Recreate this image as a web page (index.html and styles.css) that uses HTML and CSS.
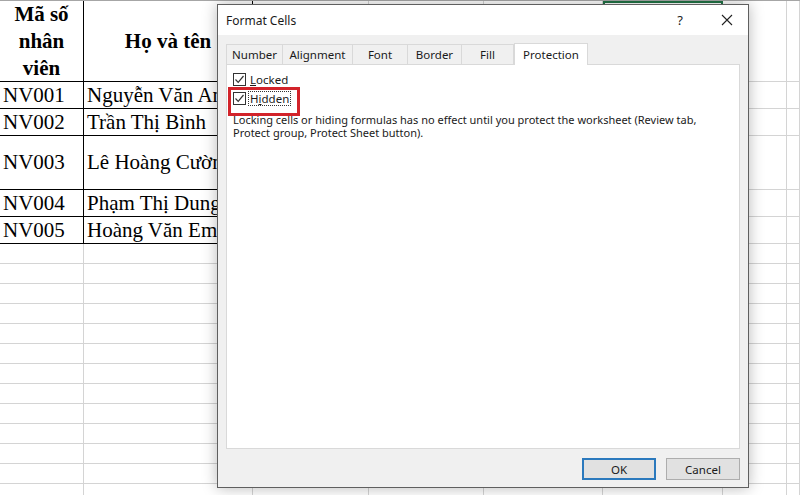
FILE: index.html
```html
<!DOCTYPE html>
<html lang="vi">
<head>
<meta charset="utf-8">
<title>Format Cells</title>
<link rel="stylesheet" href="styles.css">
</head>
<body>
<div class="sheet">
  <!-- row 1: header -->
  <div class="cell tb head">Mã số<br>nhân<br>viên</div>
  <div class="cell tb head">Họ và tên</div>
  <div class="cell"></div><div class="cell"></div><div class="cell"></div>
  <div class="cell sel"></div><div class="cell"></div><div class="cell"></div>

  <div class="cell tb">NV001</div><div class="cell tb">Nguyễn Văn An</div>
  <div class="cell"></div><div class="cell"></div><div class="cell"></div><div class="cell"></div><div class="cell"></div><div class="cell"></div>

  <div class="cell tb">NV002</div><div class="cell tb">Trần Thị Bình</div>
  <div class="cell"></div><div class="cell"></div><div class="cell"></div><div class="cell"></div><div class="cell"></div><div class="cell"></div>

  <div class="cell tb">NV003</div><div class="cell tb">Lê Hoàng Cường</div>
  <div class="cell"></div><div class="cell"></div><div class="cell"></div><div class="cell"></div><div class="cell"></div><div class="cell"></div>

  <div class="cell tb">NV004</div><div class="cell tb">Phạm Thị Dung</div>
  <div class="cell"></div><div class="cell"></div><div class="cell"></div><div class="cell"></div><div class="cell"></div><div class="cell"></div>

  <div class="cell tb">NV005</div><div class="cell tb">Hoàng Văn Em</div>
  <div class="cell"></div><div class="cell"></div><div class="cell"></div><div class="cell"></div><div class="cell"></div><div class="cell"></div>

  <!-- empty rows -->
  <div class="cell"></div><div class="cell"></div><div class="cell"></div><div class="cell"></div><div class="cell"></div><div class="cell"></div><div class="cell"></div><div class="cell"></div>
  <div class="cell"></div><div class="cell"></div><div class="cell"></div><div class="cell"></div><div class="cell"></div><div class="cell"></div><div class="cell"></div><div class="cell"></div>
  <div class="cell"></div><div class="cell"></div><div class="cell"></div><div class="cell"></div><div class="cell"></div><div class="cell"></div><div class="cell"></div><div class="cell"></div>
  <div class="cell"></div><div class="cell"></div><div class="cell"></div><div class="cell"></div><div class="cell"></div><div class="cell"></div><div class="cell"></div><div class="cell"></div>
  <div class="cell"></div><div class="cell"></div><div class="cell"></div><div class="cell"></div><div class="cell"></div><div class="cell"></div><div class="cell"></div><div class="cell"></div>
  <div class="cell"></div><div class="cell"></div><div class="cell"></div><div class="cell"></div><div class="cell"></div><div class="cell"></div><div class="cell"></div><div class="cell"></div>
  <div class="cell"></div><div class="cell"></div><div class="cell"></div><div class="cell"></div><div class="cell"></div><div class="cell"></div><div class="cell"></div><div class="cell"></div>
  <div class="cell"></div><div class="cell"></div><div class="cell"></div><div class="cell"></div><div class="cell"></div><div class="cell"></div><div class="cell"></div><div class="cell"></div>
  <div class="cell"></div><div class="cell"></div><div class="cell"></div><div class="cell"></div><div class="cell"></div><div class="cell"></div><div class="cell"></div><div class="cell"></div>
  <div class="cell"></div><div class="cell"></div><div class="cell"></div><div class="cell"></div><div class="cell"></div><div class="cell"></div><div class="cell"></div><div class="cell"></div>
  <div class="cell"></div><div class="cell"></div><div class="cell"></div><div class="cell"></div><div class="cell"></div><div class="cell"></div><div class="cell"></div><div class="cell"></div>
  <div class="cell"></div><div class="cell"></div><div class="cell"></div><div class="cell"></div><div class="cell"></div><div class="cell"></div><div class="cell"></div><div class="cell"></div>
  <div class="cell"></div><div class="cell"></div><div class="cell"></div><div class="cell"></div><div class="cell"></div><div class="cell"></div><div class="cell"></div><div class="cell"></div>
</div>

<div class="dialog">
  <div class="titlebar">
    <span class="title">Format Cells</span>
    <span class="help">?</span>
    <svg class="close" width="12" height="12" viewBox="0 0 12 12"><path d="M1 1L11 11M11 1L1 11" stroke="#222" stroke-width="1.1" fill="none"/></svg>
  </div>
  <div class="body">
    <div class="tabs">
      <div class="tab w57">Number</div>
      <div class="tab w70">Alignment</div>
      <div class="tab w55">Font</div>
      <div class="tab w54">Border</div>
      <div class="tab w52">Fill</div>
      <div class="tab active w74">Protection</div>
    </div>
    <div class="panel">
      <label class="check">
        <span class="box"><svg width="11" height="11" viewBox="0 0 11 11"><path d="M1.5 5.5L4.2 8.3L9.5 2" stroke="#333" stroke-width="1.2" fill="none"/></svg></span>
        <span class="lbl"><u>L</u>ocked</span>
      </label>
      <label class="check marked">
        <span class="box"><svg width="11" height="11" viewBox="0 0 11 11"><path d="M1.5 5.5L4.2 8.3L9.5 2" stroke="#333" stroke-width="1.2" fill="none"/></svg></span>
        <span class="lbl focus">H<u>i</u>dden</span>
      </label>
      <p class="note">Locking cells or hiding formulas has no effect until you protect the worksheet (Review tab,<br>Protect group, Protect Sheet button).</p>
    </div>
    <div class="buttons">
      <button class="btn default">OK</button>
      <button class="btn">Cancel</button>
    </div>
  </div>
</div>
</body>
</html>
```

FILE: styles.css
```css
* { box-sizing: border-box; }

html, body {
  margin: 0;
  width: 800px;
  height: 495px;
  overflow: hidden;
  background: #fff;
}

body { position: relative; }

/* worksheet grid */
.sheet {
  display: grid;
  grid-template-columns: 84px 169px 116px 115px 119px 120px 64px 1fr;
  grid-template-rows: 81px 27px 27px 54px 27px 27px;
  grid-auto-rows: 20px;
  border-top: 1px solid #a6a6a6;
}

.cell {
  border-right: 1px solid #d4d4d4;
  border-bottom: 1px solid #d4d4d4;
  font-family: "Liberation Serif", "Times New Roman", serif;
  font-size: 21px;
  color: #000;
  display: flex;
  align-items: center;
  padding-left: 3px;
  white-space: nowrap;
  overflow: hidden;
}

.cell.tb {
  border-right-color: #000;
  border-bottom-color: #000;
}

.cell.head {
  font-weight: bold;
  justify-content: center;
  text-align: center;
  line-height: 27px;
  padding-left: 0;
}

.cell.sel {
  border: 2px solid #217346;
}

/* dialog */
.dialog {
  position: absolute;
  left: 217px;
  top: 4px;
  width: 532px;
  height: 484px;
  border: 1px solid #5f5f5f;
  background: #f0f0f0;
  box-shadow: 0 0 14px rgba(0, 0, 0, 0.28);
  font-family: "Noto Sans", "Open Sans", sans-serif;
  font-size: 11.5px;
  color: #1a1a1a;
  display: flex;
  flex-direction: column;
}

.titlebar {
  height: 30px;
  background: #fff;
  display: flex;
  align-items: center;
  padding-left: 8px;
}

.title { font-size: 12px; flex: 1; }

.help {
  font-size: 13px;
  margin-right: 38px;
  color: #222;
}

.close { margin-right: 15px; }

.body {
  flex: 1;
  display: flex;
  flex-direction: column;
  padding: 7px 8px 0 8px;
}

.tabs {
  display: flex;
  align-items: flex-end;
  height: 22px;
}

.tab {
  height: 20px;
  border: 1px solid #d9d9d9;
  border-bottom: none;
  border-left: none;
  display: flex;
  align-items: center;
  justify-content: center;
  background: #f0f0f0;
  padding-bottom: 1px;
}

.tab:first-child { border-left: 1px solid #d9d9d9; }

.tab.active {
  height: 22px;
  background: #fff;
  border-left: 1px solid #d9d9d9;
  margin-bottom: -1px;
  position: relative;
  z-index: 1;
}

.w57 { width: 57px; }
.w70 { width: 70px; }
.w55 { width: 55px; }
.w54 { width: 54px; }
.w52 { width: 52px; }
.w74 { width: 74px; }

.panel {
  height: 385px;
  width: 514px;
  background: #fff;
  border: 1px solid #d9d9d9;
  padding: 5px 0 0 6px;
}

.check {
  display: flex;
  align-items: center;
  height: 19px;
  position: relative;
}

.box {
  width: 13px;
  height: 13px;
  border: 1px solid #333;
  background: #fff;
  display: flex;
  align-items: center;
  justify-content: center;
  margin-right: 3px;
}

.lbl { padding: 0 1px; line-height: 13px; }

.lbl.focus { outline: 1px dotted #333; outline-offset: 0; }

/* highlight frame around the Hidden option */
.check.marked::after {
  content: "";
  position: absolute;
  left: -5px;
  top: -2px;
  width: 66px;
  height: 23px;
  border: 3px solid #d2232a;
}

.note {
  margin: 5px 0 0 0;
  line-height: 13px;
  font-size: 11px;
}

.buttons {
  display: flex;
  justify-content: flex-end;
  gap: 10px;
  padding-top: 9px;
  padding-right: 0;
}

.btn {
  width: 74px;
  height: 22px;
  background: #e1e1e1;
  border: 1px solid #adadad;
  font-family: "Noto Sans", "Open Sans", sans-serif;
  font-size: 11.5px;
  color: #1a1a1a;
  padding: 0;
}

.btn.default {
  width: 74px;
  border: 2px solid #2b79bd;
}
```
